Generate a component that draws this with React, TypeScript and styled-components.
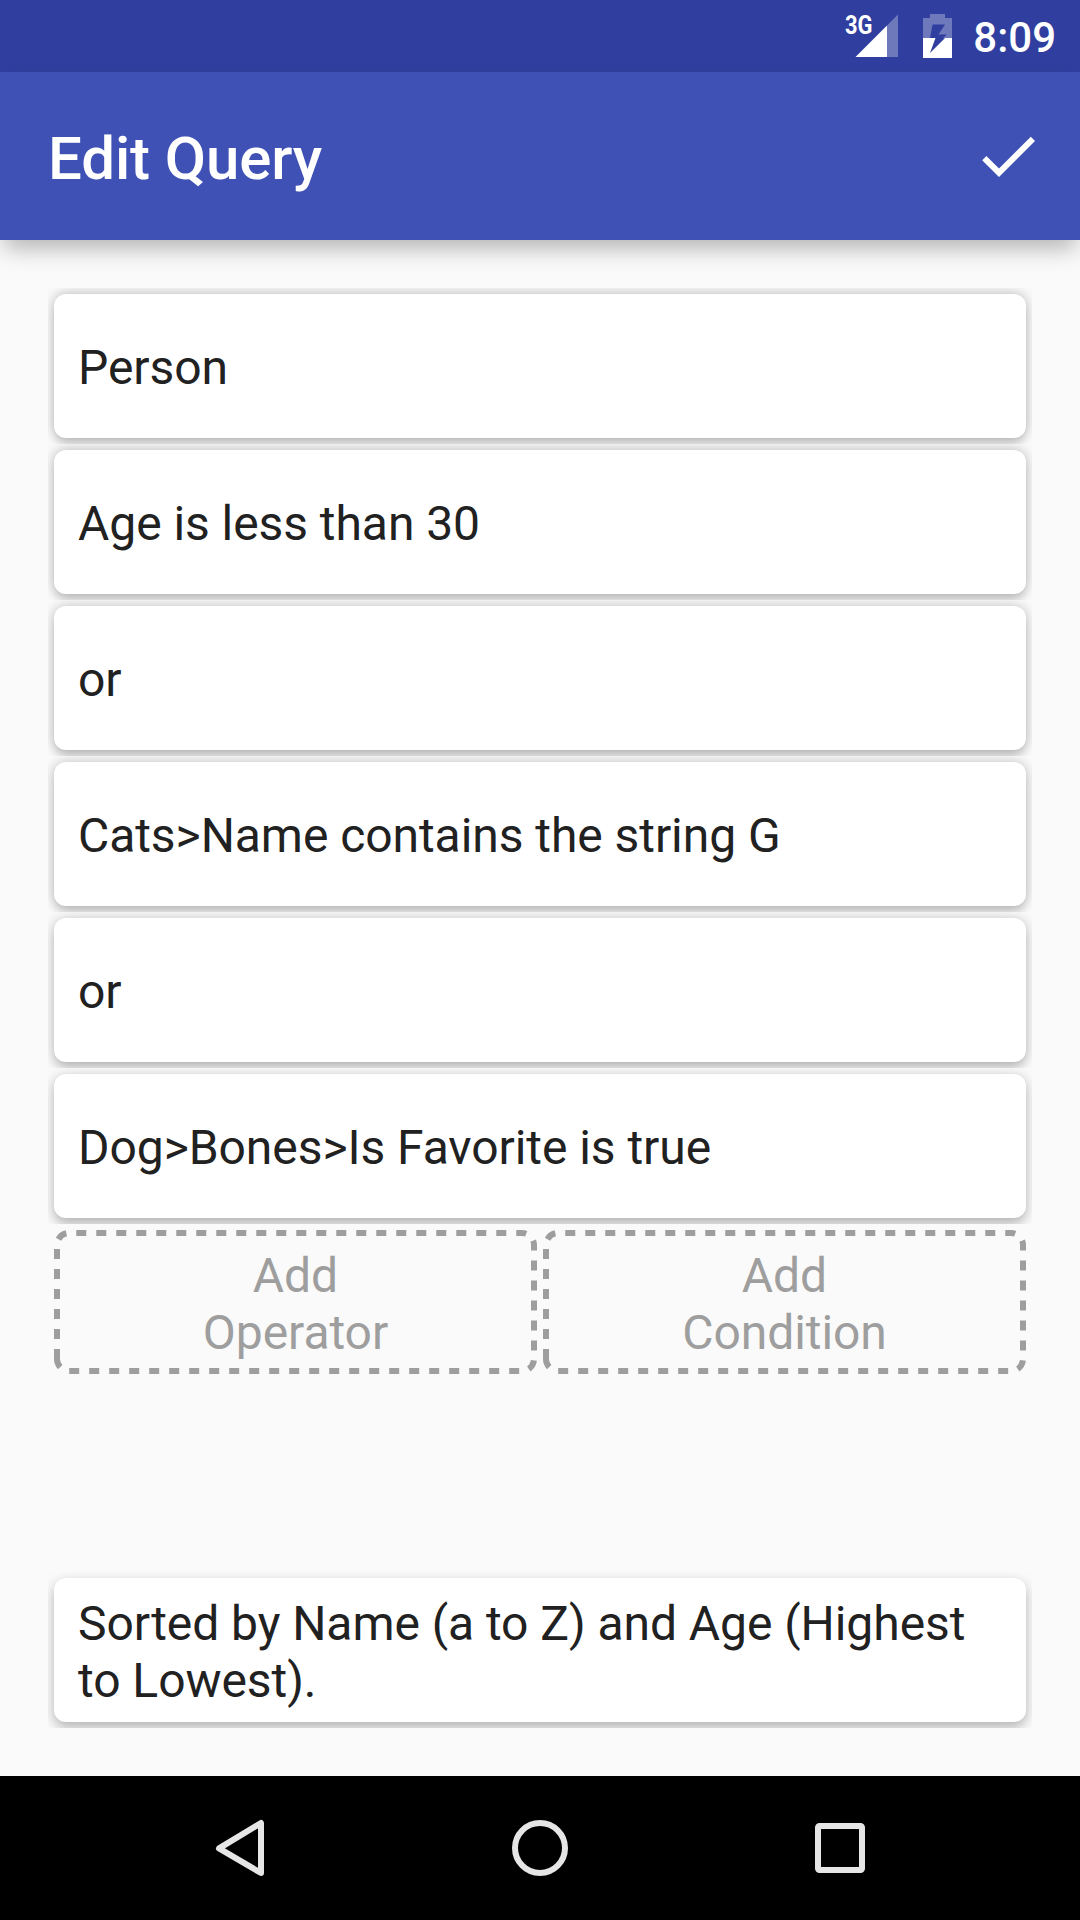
import React from 'react';
import styled, { createGlobalStyle } from 'styled-components';

const GlobalStyle = createGlobalStyle`
  * { box-sizing: border-box; }
  body { margin: 0; background: #fafafa; font-family: Roboto, "Liberation Sans", sans-serif; }
`;

const Screen = styled.div`
  width: 1080px;
  height: 1920px;
  display: flex;
  flex-direction: column;
  background: #fafafa;
  overflow: hidden;
`;

const StatusBar = styled.div`
  height: 72px;
  flex: none;
  display: flex;
  justify-content: flex-end;
  align-items: center;
  padding-right: 24px;
  background: #303f9f;
  color: #fff;
`;

const StatusIcons = styled.svg`
  display: block;
  width: 120px;
  height: 72px;
  margin-right: 13px;
`;

const Clock = styled.span`
  font-size: 42px;
  line-height: 50px;
  font-weight: 500;
  padding-top: 4px;
`;

const Toolbar = styled.header`
  height: 168px;
  flex: none;
  display: flex;
  align-items: center;
  justify-content: space-between;
  padding: 0 36px 0 48px;
  background: #3f51b5;
  color: #fff;
  box-shadow: 0 12px 22px -4px rgba(0, 0, 0, 0.29);
`;

const Title = styled.h1`
  margin: 0;
  font-size: 60px;
  line-height: 70px;
  font-weight: 500;
  letter-spacing: -0.12px;
  padding-top: 5px;
`;

const DoneButton = styled.button`
  width: 72px;
  height: 72px;
  padding: 0;
  border: 0;
  background: none;
  color: inherit;
  svg { display: block; width: 72px; height: 72px; fill: currentColor; }
`;

const Content = styled.main`
  flex: 1;
  display: flex;
  flex-direction: column;
  padding: 48px;
`;

const CardSlot = styled.div`
  height: 156px;
  flex: none;
  padding: 6px;
  overflow: hidden;
`;

const Card = styled.div<{ $drop: number }>`
  height: 144px;
  display: flex;
  align-items: center;
  padding: 3px 20px 0 24px;
  border-radius: 12px;
  background: #fff;
  color: #212121;
  font-size: 48px;
  line-height: 57px;
  letter-spacing: -0.06px;
  box-shadow:
    0 ${(p) => p.$drop}px 13px rgba(0, 0, 0, 0.28),
    0 10px 8px -2px rgba(0, 0, 0, ${(p) => 0.11 - 0.018 * p.$drop});
`;

const AddRow = styled.div`
  display: flex;
  gap: 6px;
  padding: 6px;
`;

const AddBox = styled.button`
  position: relative;
  width: 483px;
  height: 144px;
  display: flex;
  align-items: center;
  justify-content: center;
  padding: 3px 0 0;
  border: 0;
  background: none;
  color: #9e9e9e;
  font: 400 48px/57px Roboto, "Liberation Sans", sans-serif;
  letter-spacing: -0.06px;
  text-align: center;
`;

const AddLabel = styled.span`
  width: 240px;
`;

const Dashes = styled.svg`
  position: absolute;
  inset: 0;
  width: 483px;
  height: 144px;
`;

const Spacer = styled.div`
  flex: 1;
`;

const NavBar = styled.nav`
  height: 144px;
  flex: none;
  display: flex;
  justify-content: center;
  align-items: center;
  gap: 156px;
  background: #000;
`;

const NavIcon = styled.svg`
  width: 144px;
  height: 144px;
  fill: none;
  stroke: #e6e6e6;
  stroke-width: 6;
  stroke-linejoin: round;
`;

const conditions = [
  { text: 'Person', drop: 0 },
  { text: 'Age is less than 30', drop: 0.6 },
  { text: 'or', drop: 1.2 },
  { text: 'Cats>Name contains the string G', drop: 1.8 },
  { text: 'or', drop: 2.5 },
  { text: 'Dog>Bones>Is Favorite is true', drop: 3.2 },
];

function QueryCard({ text, drop }: { text: string; drop: number }) {
  return (
    <CardSlot>
      <Card $drop={drop}>{text}</Card>
    </CardSlot>
  );
}

function AddButton({ label }: { label: string }) {
  return (
    <AddBox>
      <Dashes viewBox="0 0 483 144" aria-hidden>
        <path
          d="M3 129V15A12 12 0 0 1 15 3H468A12 12 0 0 1 480 15V129A12 12 0 0 1 468 141H15A12 12 0 0 1 3 129Z"
          fill="none"
          stroke="#9e9e9e"
          strokeWidth="6"
          strokeDasharray="10 10"
        />
      </Dashes>
      <AddLabel>{label}</AddLabel>
    </AddBox>
  );
}

export default function App() {
  return (
    <Screen>
      <GlobalStyle />
      <StatusBar>
        <StatusIcons viewBox="840 0 120 72">
          <text x="845" y="33.5" fill="#fff" fontSize="25.5" fontWeight="700" textLength="27.5" lengthAdjust="spacingAndGlyphs">3G</text>
          <path d="M887 25.5L898 14.5V57H887Z" fill="#fff" fillOpacity="0.3" />
          <path d="M855.5 57L887 25.5V57Z" fill="#fff" />
          <path d="M930 14H945V18H952V38H943L947 34.5H938.5L945 24.5H932.5L930 38H923V18H930Z" fill="#fff" fillOpacity="0.3" />
          <path d="M923 38H935.5L930 53L945 38H952V58H923Z" fill="#fff" />
        </StatusIcons>
        <Clock>8:09</Clock>
      </StatusBar>
      <Toolbar>
        <Title>Edit Query</Title>
        <DoneButton aria-label="Done">
          <svg viewBox="0 0 24 24">
            <path d="M9 16.2L4.8 12l-1.4 1.4L9 19 21 7l-1.4-1.4L9 16.2z" />
          </svg>
        </DoneButton>
      </Toolbar>
      <Content>
        {conditions.map((c, i) => (
          <QueryCard key={i} text={c.text} drop={c.drop} />
        ))}
        <AddRow>
          <AddButton label="Add Operator" />
          <AddButton label="Add Condition" />
        </AddRow>
        <Spacer />
        <QueryCard text="Sorted by Name (a to Z) and Age (Highest to Lowest)." drop={5} />
      </Content>
      <NavBar>
        <NavIcon viewBox="168 1776 144 144">
          <path d="M219 1848.4L261 1823V1873Z" />
        </NavIcon>
        <NavIcon viewBox="468 1776 144 144">
          <circle cx="540" cy="1848" r="25" />
        </NavIcon>
        <NavIcon viewBox="768 1776 144 144">
          <rect x="818" y="1826" width="44" height="44" rx="1.5" />
        </NavIcon>
      </NavBar>
    </Screen>
  );
}
